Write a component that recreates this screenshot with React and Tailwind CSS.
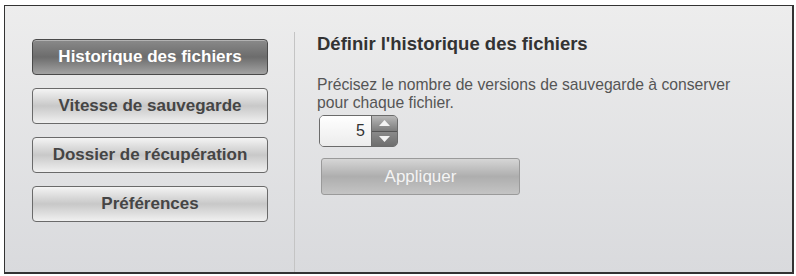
const navItems = [
  "Historique des fichiers",
  "Vitesse de sauvegarde",
  "Dossier de récupération",
  "Préférences",
];

function NavButton({ label, active }) {
  if (active) {
    return (
      <button className="h-[36px] w-[236px] rounded-[4px] border border-[#4a4a4a] bg-gradient-to-b from-[#8a8a8a] via-[#6c6c6c] to-[#a3a3a3] text-[17px] font-bold text-white shadow-[inset_0_1px_0_rgba(255,255,255,0.35)]">
        {label}
      </button>
    );
  }
  return (
    <button className="h-[36px] w-[236px] rounded-[4px] border border-[#6a6a6a] bg-gradient-to-b from-[#f4f4f4] via-[#c8c8c8] to-[#f0f0f0] text-[17px] font-bold text-[#454545]">
      {label}
    </button>
  );
}

function Stepper({ value }) {
  return (
    <div className="flex h-[32px] w-[79px] overflow-hidden rounded-[5px] border border-[#6b6b6b]">
      <div className="flex flex-1 items-center justify-end bg-gradient-to-b from-white to-[#ececec] pr-[6px] text-[16px] text-[#333]">
        {value}
      </div>
      <div className="flex w-[26px] flex-col border-l border-[#6b6b6b] bg-[#7a7a7a]">
        <div className="flex flex-1 items-center justify-center border-b border-[#555] bg-gradient-to-b from-[#b9b9b9] to-[#7c7c7c]">
          <svg width="11" height="6" viewBox="0 0 11 6"><path d="M0 6 L5.5 0 L11 6 Z" fill="#f4f4f4" /></svg>
        </div>
        <div className="flex flex-1 items-center justify-center bg-gradient-to-b from-[#8a8a8a] to-[#6e6e6e]">
          <svg width="11" height="6" viewBox="0 0 11 6"><path d="M0 0 L5.5 6 L11 0 Z" fill="#f4f4f4" /></svg>
        </div>
      </div>
    </div>
  );
}

export default function App() {
  return (
    <div className="h-[276px] w-[796px] bg-white pl-[4px] pt-[5px] font-['Liberation_Sans',Arial,sans-serif]">
      <div className="flex h-[269px] w-[790px] border-l border-t border-r-2 border-b-2 border-[#333] bg-gradient-to-b from-[#ededed] to-[#d9dadd]">
        <div className="flex w-[289px] flex-col gap-[13px] pl-[27px] pt-[33px]">
          {navItems.map((item, i) => (
            <NavButton key={item} label={item} active={i === 0} />
          ))}
        </div>
        <div className="mt-[26px] w-px bg-[#c4c4c4]" />
        <div className="flex flex-col pl-[22px] pt-[27px]">
          <h2 className="text-[18.5px] leading-[22px] font-bold text-[#333]">Définir l'historique des fichiers</h2>
          <p className="mt-[21px] text-[15.7px] leading-[18px] text-[#555]">
            Précisez le nombre de versions de sauvegarde à conserver
            <br />
            pour chaque fichier.
          </p>
          <div className="mt-[3px] pl-[2px]">
            <Stepper value="5" />
          </div>
          <button className="ml-[4px] mt-[11px] h-[37px] w-[199px] rounded-[3px] border border-[#9a9a9a] bg-gradient-to-b from-[#d6d6d6] via-[#aeaeae] to-[#c4c4c4] text-[17px] text-[#f4f4f4]">
            Appliquer
          </button>
        </div>
      </div>
    </div>
  );
}
